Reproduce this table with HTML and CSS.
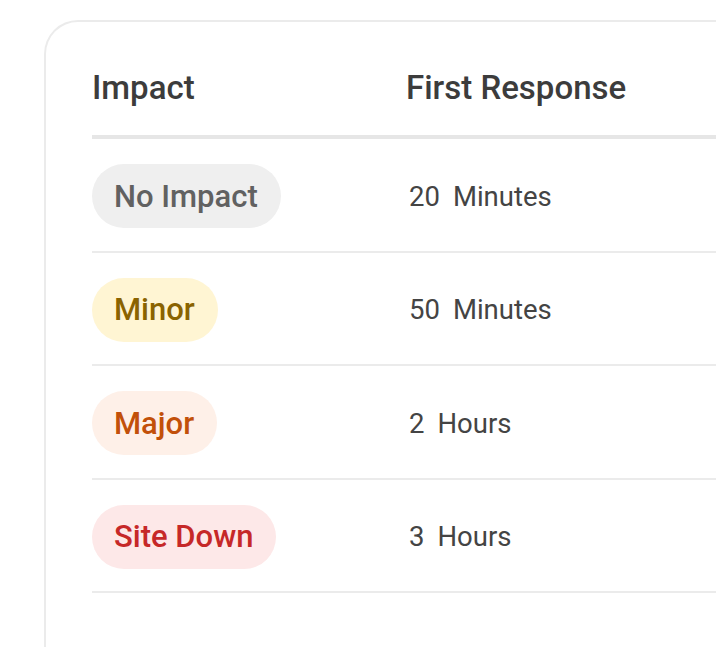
FILE: index.html
```html
<!DOCTYPE html>
<html>
<head>
  <title>Response Times</title>
  <meta charset="UTF-8">
  <link rel="stylesheet" href="styles.css">
</head>
<body>
  <div class="page">
    <div class="card">
      <div class="table">
        <div class="row head">
          <div class="cell impact">Impact</div>
          <div class="cell">First Response</div>
        </div>
        <div class="row">
          <div class="cell impact"><span class="pill pill-none">No Impact</span></div>
          <div class="cell time"><span class="num">20</span>Minutes</div>
        </div>
        <div class="row">
          <div class="cell impact"><span class="pill pill-minor">Minor</span></div>
          <div class="cell time"><span class="num">50</span>Minutes</div>
        </div>
        <div class="row">
          <div class="cell impact"><span class="pill pill-major">Major</span></div>
          <div class="cell time"><span class="num">2</span>Hours</div>
        </div>
        <div class="row">
          <div class="cell impact"><span class="pill pill-down">Site Down</span></div>
          <div class="cell time"><span class="num">3</span>Hours</div>
        </div>
      </div>
    </div>
  </div>
</body>
</html>
```

FILE: styles.css
```css
* {
  margin: 0;
  padding: 0;
  box-sizing: border-box;
}

body {
  width: 716px;
  height: 647px;
  font-family: Roboto, 'Liberation Sans', sans-serif;
  background: #fff;
  color: #444;
  overflow: hidden;
}

.page {
  padding: 20px 0 0 44px;
}

.card {
  width: 760px;
  min-height: 700px;
  border: 2px solid #ebebeb;
  border-right: none;
  border-radius: 34px 0 0 0;
  padding: 0 0 0 46px;
}

.row {
  display: flex;
  align-items: center;
  border-bottom: 2px solid #ebebeb;
  padding: 25px 0 22.5px;
}

.row.head {
  border-bottom: 4px solid #e6e6e6;
  padding: 46px 0 28px;
  font-size: 33px;
  font-weight: 500;
  color: #3c3c3c;
}

.cell.impact {
  width: 314px;
}

.pill {
  display: inline-flex;
  align-items: center;
  height: 64px;
  padding: 0 23px 0 22px;
  border-radius: 32px;
  font-size: 31px;
  font-weight: 500;
}

.pill-none {
  background: #efefef;
  color: #616161;
}

.pill-minor {
  background: #fff5d3;
  color: #8a6300;
}

.pill-major {
  background: #fef0e8;
  color: #c2500a;
}

.pill-down {
  background: #fde8e8;
  color: #c62828;
}

.time {
  font-size: 27.5px;
  color: #444;
  padding-left: 3px;
}

.num {
  margin-right: 13px;
}
```
